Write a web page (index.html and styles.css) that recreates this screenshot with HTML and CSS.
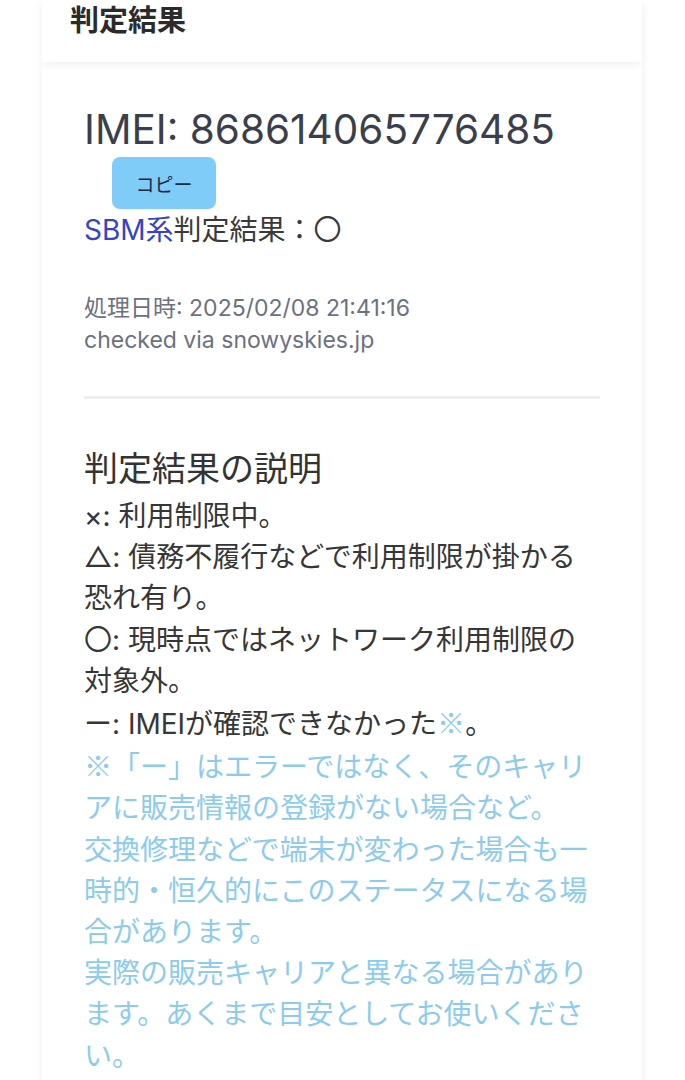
FILE: index.html
```html
<!DOCTYPE html>
<html lang="ja">
    <head>
        <meta charset="utf-8">
        <title>判定結果</title>
        <link rel="stylesheet" href="styles.css">
    </head>
<body>
    <div class="wrap">
        <div class="card card-head">
            <h1 class="head-title">判定結果</h1>
        </div>
        <div class="card card-body">
            <div class="imei">IMEI: 868614065776485</div>
            <button class="copy" type="button">コピー</button>
            <div class="verdict"><span class="carrier">SBM系</span>判定結果：〇</div>
            <div class="meta">
                <div>処理日時: 2025/02/08 21:41:16</div>
                <div>checked via snowyskies.jp</div>
            </div>
            <hr class="divider">
            <h2 class="legend-title">判定結果の説明</h2>
            <p class="legend">
                ×: 利用制限中。<br>
                △: 債務不履行などで利用制限が掛かる恐れ有り。<br>
                〇: 現時点ではネットワーク利用制限の対象外。<br>
                ー: IMEIが確認できなかった<span class="mark">※</span>。
            </p>
            <p class="note">
                ※「ー」はエラーではなく、そのキャリアに販売情報の登録がない場合など。<br>
                交換修理などで端末が変わった場合も一時的・恒久的にこのステータスになる場合があります。<br>
                実際の販売キャリアと異なる場合があります。あくまで目安としてお使いください。
            </p>
        </div>
    </div>
</body>
</html>
```

FILE: styles.css
```css
body {
    margin: 0;
    background-color: #fff;
    font-family: Inter, "Noto Sans CJK JP", sans-serif;
    color: #363636;
}

.wrap {
    width: 600px;
    margin-left: 42px;
}

.card {
    background-color: #fff;
    box-shadow: 0 2px 10px rgba(0, 0, 0, 0.07);
}

.card-head {
    height: 62px;
    padding: 0 28px;
    box-sizing: border-box;
    position: relative;
    z-index: 1;
}

.head-title {
    margin: 0;
    font-size: 29px;
    line-height: 42px;
    font-weight: 700;
    color: #2b2b2b;
}

.card-body {
    padding: 42px 42px 40px;
}

.imei {
    font-size: 40.5px;
    line-height: 52px;
    color: #3b3f4c;
}

.copy {
    display: block;
    margin: 1px 0 0 28px;
    width: 104px;
    height: 52px;
    border: none;
    border-radius: 8px;
    background-color: #80ccf8;
    color: #1f2a44;
    font-family: "Noto Sans CJK JP", sans-serif;
    font-size: 19px;
    padding: 0;
}

.verdict {
    font-size: 28px;
    line-height: 42px;
    color: #3a3a3a;
}

.carrier {
    color: #3544c4;
}

.meta {
    margin-top: 41px;
    font-size: 23px;
    line-height: 32px;
    color: #6b7180;
}

.divider {
    margin: 40px 0 0;
    border: none;
    height: 3px;
    background-color: #eeeeee;
}

.legend-title {
    margin: 46px 0 3px;
    font-size: 34px;
    line-height: 48px;
    font-weight: 400;
    color: #333;
}

.legend,
.note {
    margin: 0;
    font-size: 28px;
    line-height: 41.2px;
}

.legend {
    color: #363636;
}

.note {
    font-family: "Noto Sans CJK JP", sans-serif;
}

.mark {
    font-family: "Noto Sans CJK JP", sans-serif;
}

.mark,
.note {
    color: #8ccbeb;
}
```
